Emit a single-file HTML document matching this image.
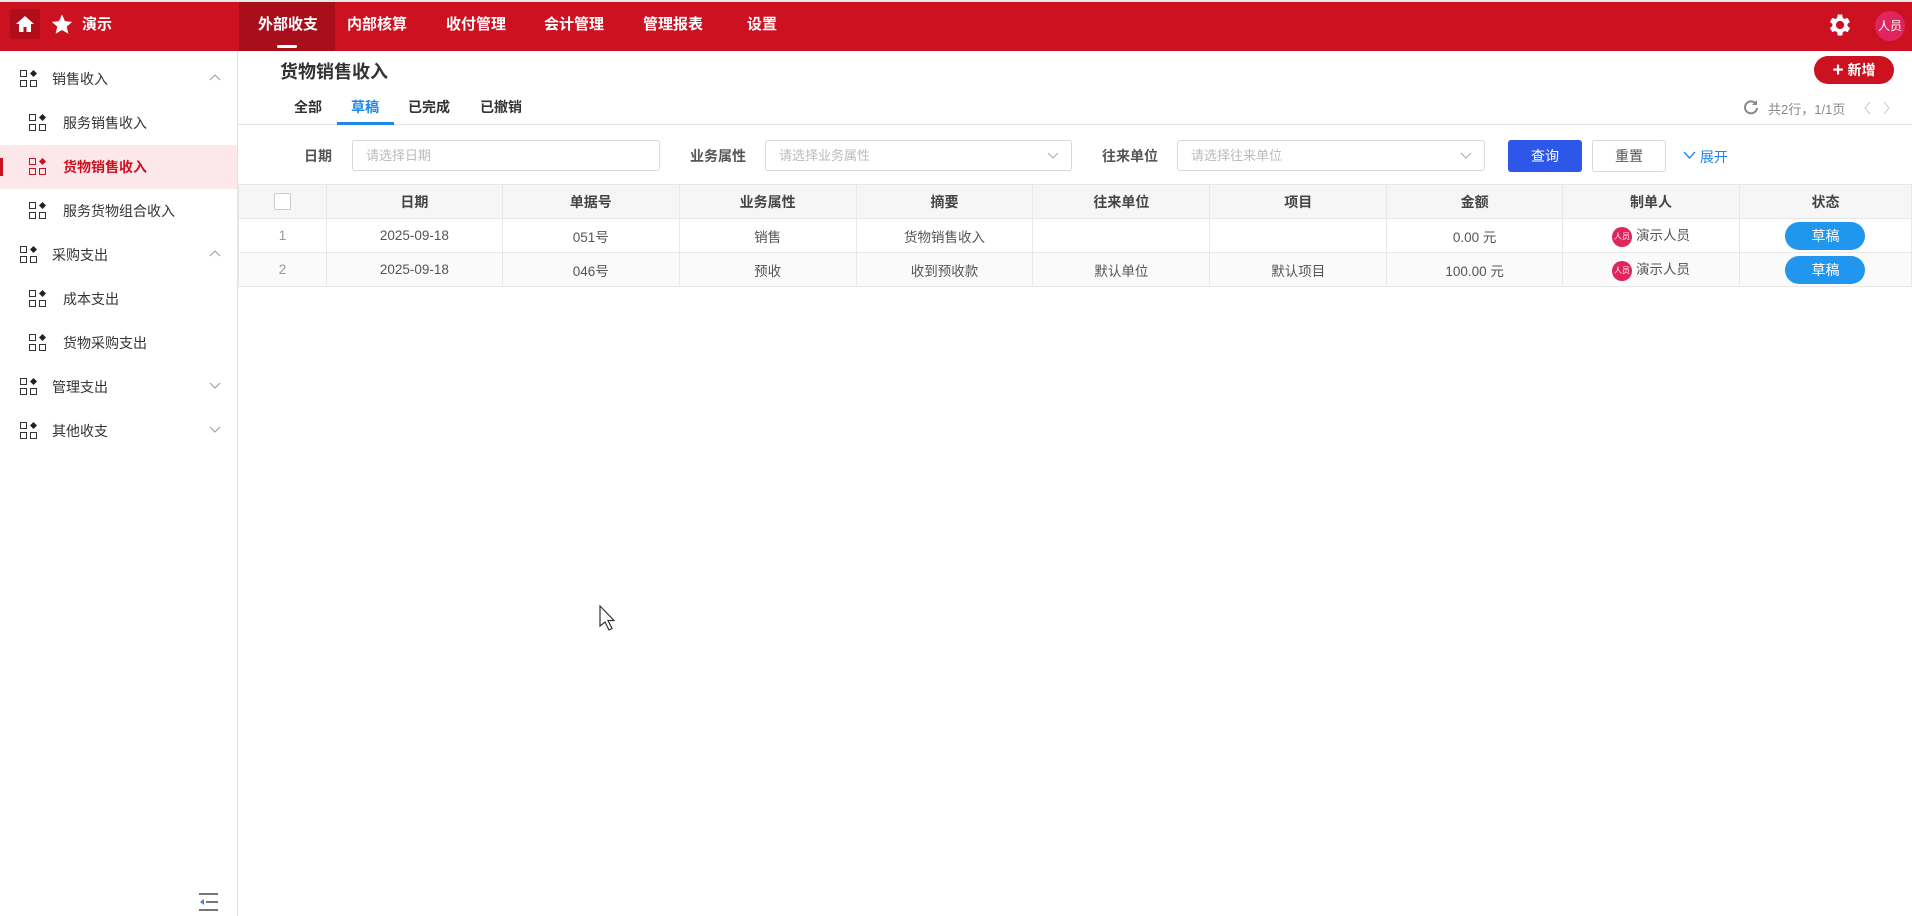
<!DOCTYPE html>
<html><head><meta charset="utf-8"><style>
*{margin:0;padding:0;box-sizing:border-box}
body{width:1912px;height:916px;overflow:hidden;background:#fff;font-family:"Liberation Sans","Noto Sans CJK SC",sans-serif;color:#333;position:relative;font-size:14px}
.a{position:absolute}
.hdr{left:0;top:0;width:1912px;height:51px;background:#cc1121;border-top:2px solid #e9e9e9}
.nav{top:0;height:49px;line-height:49px;color:#fff;font-weight:bold;font-size:15px;text-align:center;width:98px}
.side{left:0;top:51px;width:238px;height:865px;border-right:1px solid #e2e2e2}
.si{height:44px;line-height:44px;font-size:14px;color:#333;left:0;width:237px}
.ico{position:absolute;top:13px}
.chev{position:absolute;right:16px;top:16px}
.tab{top:97px;font-size:14px;font-weight:bold;color:#333}
.lbl{top:146px;font-size:14px;font-weight:bold;color:#555}
.inp{top:140px;height:31px;border:1px solid #d9d9d9;border-radius:3px;color:#bbb;font-size:13px;line-height:29px;padding-left:13px}
table{position:absolute;left:238px;top:184px;border-collapse:collapse;font-size:13.5px;color:#555}
td,th{border:1px solid #e8e8e8;text-align:center;height:34px;padding:0}
th{background:#f6f6f6;font-weight:bold;color:#444;font-size:14px}
.pill{display:inline-block;width:80px;height:28px;line-height:28px;border-radius:14px;background:#2196ef;color:#fff;font-size:14px;vertical-align:middle}
.av{display:inline-block;width:20px;height:20px;border-radius:50%;background:#e0245e;color:#fff;font-size:8px;line-height:20px;vertical-align:middle;margin-right:4px}
</style></head><body>
<div class="a hdr"></div>
<div class="a" style="left:10px;top:9px;width:30px;height:30px;background:#b20d1a;border-radius:3px"></div>
<svg class="a" style="left:14px;top:13px" width="22" height="22" viewBox="0 0 22 22"><path d="M11 3L2 11h3v8h4.5v-5h3v5H17v-8h3z" fill="#fff"/></svg>
<svg class="a" style="left:50px;top:13px" width="24" height="23" viewBox="0 0 24 24"><path d="M12 1.5l3.1 7 7.6.7-5.8 5 1.8 7.5L12 17.7 5.3 21.7l1.8-7.5-5.8-5 7.6-.7z" fill="#fff"/></svg>
<div class="a" style="left:82px;top:0;line-height:49px;color:#fff;font-weight:bold;font-size:15px">演示</div>
<div class="a" style="left:239px;top:2px;width:96px;height:49px;background:#a90f1b"></div>
<div class="a nav" style="left:239px">外部收支</div>
<div class="a" style="left:277px;top:45px;width:20px;height:3px;background:#fff;border-radius:2px"></div>
<div class="a nav" style="left:328px">内部核算</div>
<div class="a nav" style="left:427px">收付管理</div>
<div class="a nav" style="left:525px">会计管理</div>
<div class="a nav" style="left:624px">管理报表</div>
<div class="a nav" style="left:713px">设置</div>
<svg class="a" style="left:1826px;top:11px" width="28" height="28" viewBox="0 0 24 24"><path fill="#fff" d="M19.4 13a7.5 7.5 0 000-2l2.1-1.6-2-3.5-2.5 1a7.6 7.6 0 00-1.7-1L15 3h-4l-.4 2.9a7.6 7.6 0 00-1.7 1l-2.5-1-2 3.5L6.5 11a7.5 7.5 0 000 2l-2.1 1.6 2 3.5 2.5-1a7.6 7.6 0 001.7 1L11 21h4l.4-2.9a7.6 7.6 0 001.7-1l2.5 1 2-3.5zM13 15.5a3.5 3.5 0 110-7 3.5 3.5 0 010 7z" transform="translate(-1 0)"/></svg>
<div class="a" style="left:1875px;top:11px;width:30px;height:30px;border-radius:50%;background:#e0245e;color:#fff;font-size:12px;line-height:30px;text-align:center">人员</div>

<div class="a side"></div>
<svg width="0" height="0" style="position:absolute"><defs><g id="gi"><rect x="0.5" y="0.5" width="6" height="6" fill="none" stroke="#333"/><rect x="0.5" y="10.5" width="6" height="6" fill="none" stroke="#333"/><rect x="10.5" y="10.5" width="6" height="6" fill="none" stroke="#333"/><path d="M13.5 0l3.5 3.5-3.5 3.5-3.5-3.5z" fill="#222"/></g><g id="gr"><rect x="0.5" y="0.5" width="6" height="6" fill="none" stroke="#cc1121"/><rect x="0.5" y="10.5" width="6" height="6" fill="none" stroke="#cc1121"/><rect x="10.5" y="10.5" width="6" height="6" fill="none" stroke="#cc1121"/><path d="M13.5 0l3.5 3.5-3.5 3.5-3.5-3.5z" fill="#cc1121"/></g></defs></svg>
<div class="a si" style="top:57px"><svg class="ico" style="left:20px" width="18" height="18"><use href="#gi"/></svg><span class="a" style="left:52px">销售收入</span><svg class="chev" width="12" height="10"><path d="M1 7l5-5 5 5" fill="none" stroke="#999"/></svg></div>
<div class="a si" style="top:101px"><svg class="ico" style="left:29px" width="18" height="18"><use href="#gi"/></svg><span class="a" style="left:63px">服务销售收入</span></div>
<div class="a si" style="top:145px;background:#fce8ea"><div class="a" style="left:0;top:13px;width:3px;height:18px;background:#cc1121"></div><svg class="ico" style="left:29px" width="18" height="18"><use href="#gr"/></svg><span class="a" style="left:63px;color:#cc1121;font-weight:bold">货物销售收入</span></div>
<div class="a si" style="top:189px"><svg class="ico" style="left:29px" width="18" height="18"><use href="#gi"/></svg><span class="a" style="left:63px">服务货物组合收入</span></div>
<div class="a si" style="top:233px"><svg class="ico" style="left:20px" width="18" height="18"><use href="#gi"/></svg><span class="a" style="left:52px">采购支出</span><svg class="chev" width="12" height="10"><path d="M1 7l5-5 5 5" fill="none" stroke="#999"/></svg></div>
<div class="a si" style="top:277px"><svg class="ico" style="left:29px" width="18" height="18"><use href="#gi"/></svg><span class="a" style="left:63px">成本支出</span></div>
<div class="a si" style="top:321px"><svg class="ico" style="left:29px" width="18" height="18"><use href="#gi"/></svg><span class="a" style="left:63px">货物采购支出</span></div>
<div class="a si" style="top:365px"><svg class="ico" style="left:20px" width="18" height="18"><use href="#gi"/></svg><span class="a" style="left:52px">管理支出</span><svg class="chev" width="12" height="10"><path d="M1 2l5 5 5-5" fill="none" stroke="#999"/></svg></div>
<div class="a si" style="top:409px"><svg class="ico" style="left:20px" width="18" height="18"><use href="#gi"/></svg><span class="a" style="left:52px">其他收支</span><svg class="chev" width="12" height="10"><path d="M1 2l5 5 5-5" fill="none" stroke="#999"/></svg></div>
<svg class="a" style="left:199px;top:893px" width="20" height="18"><path d="M0 1h19M7 9h12M0 17h19" stroke="#777" stroke-width="2"/><path d="M1 9l4-3v6z" fill="#4a7fd8"/></svg>

<div class="a" style="left:280px;top:58px;font-size:18px;font-weight:bold;color:#333">货物销售收入</div>
<div class="a" style="left:1814px;top:56px;width:80px;height:28px;border-radius:14px;background:#cc1121;color:#fff;font-weight:bold;font-size:14px;line-height:28px;text-align:center"><span style="font-size:19px;vertical-align:-1px">+</span> 新增</div>
<div class="a tab" style="left:294px">全部</div>
<div class="a tab" style="left:351px;color:#1e88e5">草稿</div>
<div class="a tab" style="left:408px">已完成</div>
<div class="a tab" style="left:480px">已撤销</div>
<div class="a" style="left:238px;top:124px;width:1674px;height:1px;background:#e2e2e2"></div>
<div class="a" style="left:337px;top:122px;width:57px;height:3px;background:#1e88e5"></div>
<svg class="a" style="left:1743px;top:99px" width="16" height="16" viewBox="0 0 16 16"><path d="M13 5A6 6 0 1014 9" fill="none" stroke="#888" stroke-width="2"/><path d="M14 1v5h-5z" fill="#888"/></svg>
<div class="a" style="left:1768px;top:99px;font-size:13px;color:#888">共2行，1/1页</div>
<svg class="a" style="left:1862px;top:101px" width="30" height="14"><path d="M8 1L3 7l5 6M22 1l5 6-5 6" fill="none" stroke="#ccc"/></svg>

<div class="a lbl" style="left:304px">日期</div>
<div class="a inp" style="left:352px;width:308px">请选择日期</div>
<div class="a lbl" style="left:690px">业务属性</div>
<div class="a inp" style="left:765px;width:307px">请选择业务属性<svg class="a" style="right:12px;top:11px" width="12" height="8"><path d="M1 1l5 5 5-5" fill="none" stroke="#aaa"/></svg></div>
<div class="a lbl" style="left:1102px">往来单位</div>
<div class="a inp" style="left:1177px;width:308px">请选择往来单位<svg class="a" style="right:12px;top:11px" width="12" height="8"><path d="M1 1l5 5 5-5" fill="none" stroke="#aaa"/></svg></div>
<div class="a" style="left:1508px;top:140px;width:74px;height:32px;background:#2d57e8;border-radius:3px;color:#fff;text-align:center;line-height:32px;font-size:14px">查询</div>
<div class="a" style="left:1592px;top:140px;width:74px;height:32px;border:1px solid #d9d9d9;border-radius:3px;color:#555;text-align:center;line-height:30px;font-size:14px">重置</div>
<div class="a" style="left:1683px;top:147px;color:#1e88e5;font-size:14px"><svg width="13" height="9" style="vertical-align:2px"><path d="M1 1l5.5 6L12 1" fill="none" stroke="#1e88e5" stroke-width="1.3"/></svg> 展开</div>

<table>
<colgroup><col style="width:88px"><col style="width:176px"><col style="width:177px"><col style="width:177px"><col style="width:177px"><col style="width:177px"><col style="width:177px"><col style="width:176px"><col style="width:177px"><col style="width:172px"></colgroup>
<tr><th><span style="display:inline-block;width:17px;height:17px;border:1px solid #ccc;border-radius:2px;background:#fff;vertical-align:middle"></span></th><th>日期</th><th>单据号</th><th>业务属性</th><th>摘要</th><th>往来单位</th><th>项目</th><th>金额</th><th>制单人</th><th>状态</th></tr>
<tr><td style="color:#999">1</td><td>2025-09-18</td><td>051号</td><td>销售</td><td>货物销售收入</td><td></td><td></td><td>0.00 元</td><td><span class="av">人员</span>演示人员</td><td><span class="pill">草稿</span></td></tr>
<tr style="background:#fafafa"><td style="color:#999">2</td><td>2025-09-18</td><td>046号</td><td>预收</td><td>收到预收款</td><td>默认单位</td><td>默认项目</td><td>100.00 元</td><td><span class="av">人员</span>演示人员</td><td><span class="pill">草稿</span></td></tr>
</table>
<svg class="a" style="left:599px;top:605px" width="20" height="28" viewBox="0 0 20 28"><path d="M1 1v20l5-4 4 8 3-1.5-4-8h6z" fill="#fff" stroke="#333" stroke-width="1.2"/></svg>
</body></html>
